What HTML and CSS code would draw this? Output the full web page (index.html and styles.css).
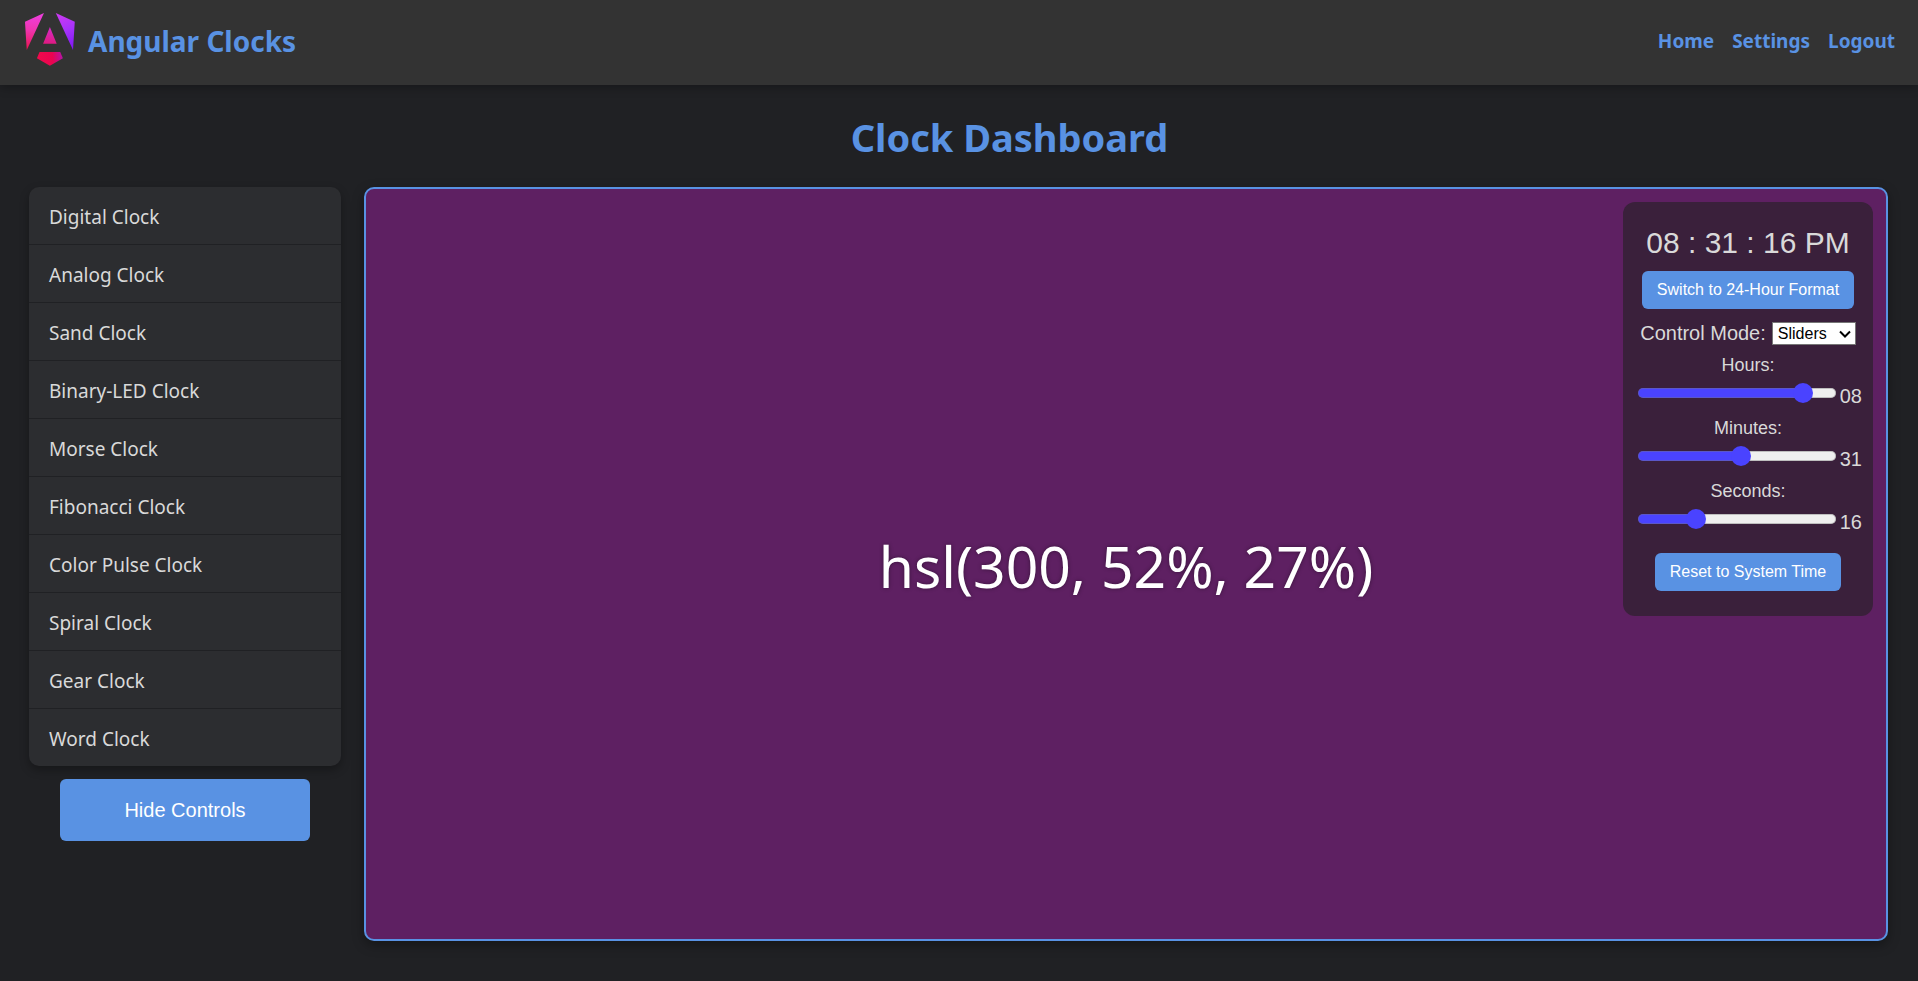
FILE: index.html
```html
<!DOCTYPE html>
<html lang="en">
<head>
<meta charset="utf-8">
<title>Angular Clocks</title>
<meta name="viewport" content="width=device-width, initial-scale=1">
<link rel="stylesheet" href="styles.css">
</head>
<body>
<header class="topbar">
  <a class="brand" href="#">
    <svg class="brand-logo" viewBox="0 0 223 236" aria-hidden="true">
      <defs>
        <linearGradient id="base" x1="49" x2="225.8" y1="213.8" y2="129.7" gradientUnits="userSpaceOnUse">
          <stop stop-color="#E40035"/><stop offset=".24" stop-color="#F60A48"/><stop offset=".352" stop-color="#F20755"/><stop offset=".494" stop-color="#DC087D"/><stop offset=".745" stop-color="#9717E7"/><stop offset="1" stop-color="#6C00F5"/>
        </linearGradient>
        <linearGradient id="left" x1="30" x2="20" y1="0" y2="165" gradientUnits="userSpaceOnUse">
          <stop stop-color="#EE3FE0"/><stop offset=".45" stop-color="#EF35B0"/><stop offset="1" stop-color="#EC1250"/>
        </linearGradient>
        <linearGradient id="right" x1="140" x2="215" y1="0" y2="165" gradientUnits="userSpaceOnUse">
          <stop stop-color="#D03AF2"/><stop offset=".5" stop-color="#A532FA"/><stop offset="1" stop-color="#7C14F4"/>
        </linearGradient>
        <linearGradient id="center" x1="115" x2="108" y1="62" y2="137" gradientUnits="userSpaceOnUse">
          <stop stop-color="#D52BCB"/><stop offset="1" stop-color="#DE1A80"/>
        </linearGradient>
        <linearGradient id="bottom" x1="53" x2="169" y1="205" y2="196" gradientUnits="userSpaceOnUse">
          <stop stop-color="#F00A4C"/><stop offset=".6" stop-color="#EA0450"/><stop offset="1" stop-color="#B414A8"/>
        </linearGradient>
      </defs>
      <path fill="url(#right)" d="m222.077 39.192-8.019 125.923L137.387 0l84.69 39.192Z"/>
      <path fill="url(#bottom)" d="m168.972 202.017-57.933 33.056-57.934-33.056 11.783-28.556h92.301l11.783 28.556Z"/>
      <path fill="url(#center)" d="m111.039 62.675 30.357 73.803H80.681l30.358-73.803Z"/>
      <path fill="url(#left)" d="M7.937 165.115 0 39.192 84.69 0 7.937 165.115Z"/>
    </svg>
    <span>Angular Clocks</span>
  </a>
  <nav class="topnav">
    <a href="#">Home</a>
    <a href="#">Settings</a>
    <a href="#">Logout</a>
  </nav>
</header>
<main class="dashboard">
  <h1 class="title">Clock Dashboard</h1>
  <div class="layout">
    <aside class="sidebar">
      <ul class="clock-list">
        <li><a href="#">Digital Clock</a></li>
        <li><a href="#">Analog Clock</a></li>
        <li><a href="#">Sand Clock</a></li>
        <li><a href="#">Binary-LED Clock</a></li>
        <li><a href="#">Morse Clock</a></li>
        <li><a href="#">Fibonacci Clock</a></li>
        <li><a href="#">Color Pulse Clock</a></li>
        <li><a href="#">Spiral Clock</a></li>
        <li><a href="#">Gear Clock</a></li>
        <li><a href="#">Word Clock</a></li>
      </ul>
      <button class="btn btn-toggle" type="button">Hide Controls</button>
    </aside>
    <section class="display">
      <p class="color-code">hsl(300, 52%, 27%)</p>
      <div class="controls">
        <div class="time">08 : 31 : 16 PM</div>
        <button class="btn" type="button">Switch to 24-Hour Format</button>
        <div class="mode">
          <label for="mode">Control Mode:</label>
          <div class="select">
            <select id="mode"><option>Sliders</option><option>Inputs</option></select>
            <svg viewBox="0 0 12 8" aria-hidden="true"><path d="M1 1.5 6 6.5 11 1.5" fill="none" stroke="#000" stroke-width="2"/></svg>
          </div>
        </div>
        <div class="unit">
          <label for="hours">Hours:</label>
          <div class="slide"><input id="hours" type="range" min="0" max="23" value="20" style="--fill: 84%"><output for="hours">08</output></div>
        </div>
        <div class="unit">
          <label for="minutes">Minutes:</label>
          <div class="slide"><input id="minutes" type="range" min="0" max="59" value="31" style="--fill: 52%"><output for="minutes">31</output></div>
        </div>
        <div class="unit">
          <label for="seconds">Seconds:</label>
          <div class="slide"><input id="seconds" type="range" min="0" max="59" value="16" style="--fill: 29%"><output for="seconds">16</output></div>
        </div>
        <button class="btn btn-reset" type="button">Reset to System Time</button>
      </div>
    </section>
  </div>
</main>
</body>
</html>
```
FILE: styles.css
```css
* { box-sizing: border-box; }

body {
  margin: 0;
  min-height: 100vh;
  display: flex;
  flex-direction: column;
  background: #202124;
  color: #d9d9d9;
  font-family: "Segoe UI", "Noto Sans", "Open Sans", sans-serif;
}

a { color: inherit; text-decoration: none; }

.topbar {
  display: flex;
  justify-content: space-between;
  align-items: center;
  height: 85px;
  padding: 0 23px 4px 25px;
  background: #333;
  color: #5992e3;
  font-weight: 700;
  box-shadow: 0 2px 10px rgba(0, 0, 0, 0.3);
}

.brand { display: flex; align-items: center; gap: 13px; font-size: 28px; }
.brand-logo { width: 50px; height: 53px; margin-bottom: 2px; }
.topnav { display: flex; gap: 18px; font-size: 19px; }

.dashboard {
  flex: 1;
  display: flex;
  flex-direction: column;
  padding: 24px 30px 40px 29px;
}

.title {
  margin: 0 0 22px;
  padding-left: 102px;
  color: #5992e3;
  font-size: 38px;
  line-height: 56px;
  text-align: center;
}

.layout { flex: 1; display: flex; gap: 23px; }
.sidebar { flex: 0 0 312px; display: flex; flex-direction: column; align-items: center; gap: 13px; }

.clock-list {
  width: 100%;
  margin: 0;
  padding: 0;
  list-style: none;
  overflow: hidden;
  border-radius: 10px;
  background: #2c2d30;
  box-shadow: 0 4px 10px rgba(0, 0, 0, 0.3);
}
.clock-list li + li { border-top: 1px solid #202124; }
.clock-list a { display: block; padding: 17px 20px 14px; font-size: 19px; line-height: 26px; }

.btn {
  padding: 10px 15px;
  border: 0;
  border-radius: 6px;
  background: #5992e3;
  color: #fff;
  font-family: Arial, "Liberation Sans", sans-serif;
  font-size: 16px;
  line-height: 18px;
}
.btn-toggle { width: 80%; padding: 20px; font-size: 20px; line-height: 22px; }

.display {
  position: relative;
  flex: 1;
  display: flex;
  align-items: center;
  justify-content: center;
  border: 2px solid #5992e3;
  border-radius: 10px;
  background: #5e2062;
  box-shadow: 0 4px 12px rgba(0, 0, 0, 0.35);
}

.color-code {
  margin: 0;
  padding-top: 4px;
  color: #fff;
  font-size: 57px;
  text-shadow: 0 0 4px rgba(0, 0, 0, 0.4);
}

.controls {
  position: absolute;
  top: 13px;
  right: 13px;
  width: 250px;
  display: flex;
  flex-direction: column;
  align-items: center;
  padding: 23px 12px 25px;
  border-radius: 12px;
  background: #3a203b;
  font-family: Arial, "Liberation Sans", sans-serif;
}

.time { margin-bottom: 10px; font-size: 30px; line-height: 36px; }

.mode { display: flex; align-items: center; gap: 6px; margin: 12px 0 8px; font-size: 20px; line-height: 24px; }
.select { position: relative; display: flex; }
.select select {
  width: 84px;
  height: 23px;
  padding: 0 5px;
  appearance: none;
  border: 1px solid #767676;
  border-radius: 0;
  background: #fff;
  color: #000;
  font-family: inherit;
  font-size: 16px;
}
.select svg { position: absolute; top: 8px; right: 5px; width: 12px; height: 8px; pointer-events: none; }

.unit { width: 100%; padding-bottom: 8px; text-align: center; }
.unit label { display: block; font-size: 18px; line-height: 24px; }
.slide { display: flex; align-items: center; gap: 4px; height: 31px; margin: 0 -1px 0 3px; }
.slide output { padding-top: 6px; font-size: 20px; line-height: 24px; }

input[type="range"] {
  flex: 1;
  min-width: 0;
  height: 10px;
  margin: 0;
  appearance: none;
  border-radius: 5px;
  background: linear-gradient(to right, #4a43ff var(--fill), #efefef var(--fill));
  box-shadow: inset 0 0 0 1px rgba(118, 118, 118, 0.4);
}
input[type="range"]::-webkit-slider-thumb {
  appearance: none;
  width: 20px;
  height: 20px;
  border-radius: 50%;
  background: #4a43ff;
}

.btn-reset { margin-top: 11px; }
```
